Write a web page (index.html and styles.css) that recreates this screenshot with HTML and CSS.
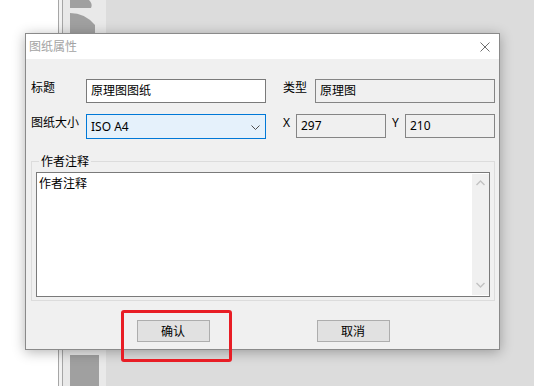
FILE: index.html
```html
<!DOCTYPE html>
<html lang="zh">
<head>
    <meta charset="UTF-8">
    <title>图纸属性</title>
    <link rel="stylesheet" href="styles.css">
</head>
<body>
    <div class="desk">
        <div class="desk-white"></div>
        <div class="desk-rail"></div>
        <div class="desk-panel">
            <svg class="panel-shapes" width="30" height="33" viewBox="0 0 30 33">
                <path d="M0 0 H19 Q23 4 21 8 H0 Z" fill="#a0a0a0"/>
                <path d="M0 13 Q15 13 25 25 V33 H0 Z" fill="#a0a0a0"/>
            </svg>
            <div class="panel-square"></div>
        </div>
        <div class="desk-rest"></div>
    </div>

    <div class="dialog">
        <div class="title-bar">
            <span class="title">图纸属性</span>
            <svg class="close" width="10" height="10" viewBox="0 0 10 10">
                <path d="M0.5 0.5 L9.5 9.5 M9.5 0.5 L0.5 9.5" stroke="#6f6f6f" stroke-width="1"/>
            </svg>
        </div>

        <div class="content">
            <div class="row">
                <span class="label w-main">标题</span>
                <div class="field w-wide">原理图图纸</div>
                <span class="label w-type">类型</span>
                <div class="field field-off w-wide">原理图</div>
            </div>

            <div class="row row-2">
                <span class="label w-main">图纸大小</span>
                <div class="select w-wide">
                    <span>ISO A4</span>
                    <svg width="9" height="5" viewBox="0 0 9 5">
                        <path d="M0.5 0.5 L4.5 4.5 L8.5 0.5" fill="none" stroke="#4d4d4d" stroke-width="1"/>
                    </svg>
                </div>
                <span class="label w-xy gap-x">X</span>
                <div class="field field-off w-narrow">297</div>
                <span class="label w-xy gap-y">Y</span>
                <div class="field field-off w-narrow">210</div>
            </div>

            <div class="group">
                <span class="group-label">作者注释</span>
                <div class="memo">
                    <div class="memo-text">作者注释</div>
                    <div class="scrollbar">
                        <svg width="9" height="6" viewBox="0 0 9 6">
                            <path d="M0.5 5 L4.5 1 L8.5 5" fill="none" stroke="#c2c2c2" stroke-width="1.4"/>
                        </svg>
                        <svg width="9" height="6" viewBox="0 0 9 6">
                            <path d="M0.5 1 L4.5 5 L8.5 1" fill="none" stroke="#c2c2c2" stroke-width="1.4"/>
                        </svg>
                    </div>
                </div>
            </div>

            <div class="buttons">
                <button class="btn">确认</button>
                <button class="btn">取消</button>
            </div>
        </div>
    </div>

    <div class="mark"></div>
</body>
</html>
```

FILE: styles.css
```css
/* 기본 */
body {
    margin: 0;
    width: 534px;
    height: 386px;
    overflow: hidden;
    position: relative;
    font-family: "Noto Sans", "Noto Sans CJK SC", sans-serif;
    font-size: 12px;
    color: #000;
}

/* 뒤쪽 화면 */
.desk {
    display: flex;
    height: 386px;
}
.desk-white {
    width: 58px;
    background-color: #ffffff;
}
.desk-rail {
    width: 3px;
    background-color: #f2f2f2;
    border-left: 1px solid #a6a6a6;
    border-right: 1px solid #a6a6a6;
}
.desk-panel {
    width: 43px;
    background-color: #e9e9e9;
    display: flex;
    flex-direction: column;
    justify-content: space-between;
    padding-left: 7px;
    box-sizing: border-box;
}
.panel-shapes {
    display: block;
}
.panel-square {
    width: 29px;
    height: 31px;
    background-color: #a0a0a0;
}
.desk-rest {
    flex: 1;
    background-color: #dcdcdc;
}

/* 대화상자 */
.dialog {
    position: absolute;
    left: 25px;
    top: 33px;
    width: 475px;
    height: 317px;
    box-sizing: border-box;
    border: 1px solid #8a8a8a;
    background-color: #f0f0f0;
    box-shadow: 0 2px 12px rgba(0, 0, 0, 0.3);
    display: flex;
    flex-direction: column;
}
.title-bar {
    height: 25px;
    background-color: #ffffff;
    display: flex;
    align-items: center;
    justify-content: space-between;
    padding: 0 9px 0 3px;
}
.title {
    color: #a3a3a3;
    line-height: 16px;
}

.content {
    padding: 20px 4px 0 5px;
}
.row {
    display: flex;
    align-items: flex-start;
    height: 25px;
}
.row-2 {
    margin-top: 10px;
}
.label {
    line-height: 15px;
    padding-top: 1px;
}
.w-main { width: 55px; }
.w-type { width: 32px; margin-left: 17px; }
.w-xy { width: 13px; padding-top: 1px; }
.gap-x { margin-left: 17px; }
.gap-y { margin-left: 6px; }
.w-wide { width: 180px; }
.w-narrow { width: 90px; }

.field {
    height: 24px;
    box-sizing: border-box;
    border: 1px solid #7a7a7a;
    background-color: #ffffff;
    padding: 0 4px;
    line-height: 22px;
}
.field-off {
    background-color: #f0f0f0;
    border-color: #858585;
}
.select {
    height: 25px;
    box-sizing: border-box;
    border: 1px solid #0078d7;
    background-color: #e5f1fb;
    display: flex;
    align-items: center;
    justify-content: space-between;
    padding: 0 5px 0 4px;
}
.select svg {
    margin-top: 2px;
}

/* 그룹 상자 */
.group {
    position: relative;
    margin-top: 22px;
    height: 140px;
    box-sizing: border-box;
    border: 1px solid #dcdcdc;
    padding: 10px 4px 3px 4px;
}
.group-label {
    position: absolute;
    top: -8px;
    left: 7px;
    padding: 0 2px;
    line-height: 15px;
    background-color: #f0f0f0;
}
.memo {
    height: 125px;
    box-sizing: border-box;
    border: 1px solid #7a7a7a;
    background-color: #ffffff;
    display: flex;
}
.memo-text {
    flex: 1;
    padding: 3px 2px;
    line-height: 16px;
}
.scrollbar {
    width: 17px;
    margin: 1px 0;
    background-color: #f0f0f0;
    display: flex;
    flex-direction: column;
    justify-content: space-between;
    align-items: center;
    padding: 6px 0 7px;
    box-sizing: border-box;
}

/* 버튼 */
.buttons {
    display: flex;
    justify-content: center;
    gap: 107px;
    margin-top: 19px;
}
.btn {
    width: 73px;
    height: 22px;
    box-sizing: border-box;
    border: 1px solid #adadad;
    background-color: #e1e1e1;
    font-family: inherit;
    font-size: 12px;
    padding: 0;
}

/* 빨간 표시 */
.mark {
    position: absolute;
    left: 121px;
    top: 310px;
    width: 111px;
    height: 52px;
    box-sizing: border-box;
    border: 3px solid #e81d25;
    border-radius: 3px;
}
```
